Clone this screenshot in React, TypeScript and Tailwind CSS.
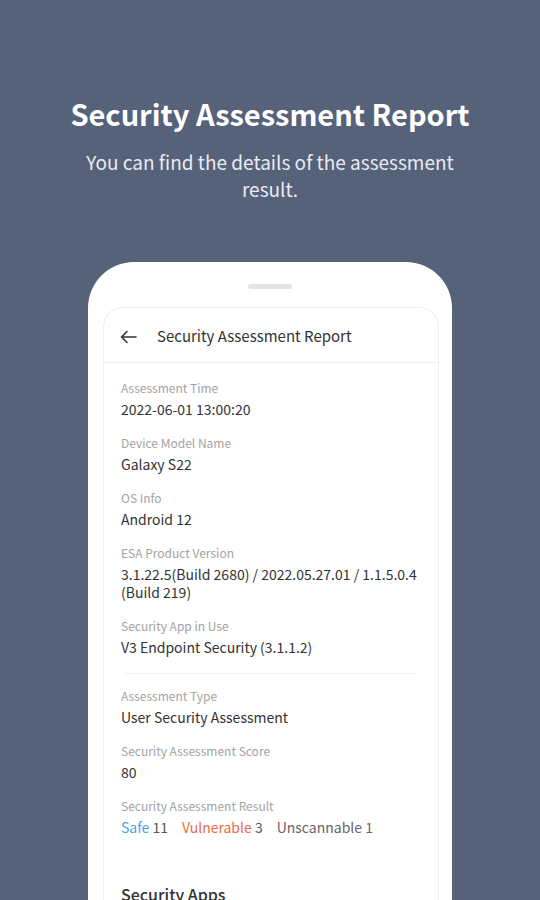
import React from "react";

const font = { fontFamily: '"Noto Sans CJK KR", "Noto Sans", sans-serif' };

const Field = ({ label, children }: { label: string; children: React.ReactNode }) => (
  <div className="mb-[17px]">
    <p className="text-[12px] leading-[16px] text-[#a3a3a3]">{label}</p>
    <div className="mt-[4px] text-[14px] leading-[18px] text-[#333333]">{children}</div>
  </div>
);

export default function App() {
  return (
    <div className="h-[900px] overflow-hidden bg-[#56617a]" style={font}>
      {/* Heading */}
      <div className="pt-[93px] text-center">
        <h1 className="text-[29px] leading-[40px] font-bold text-white">Security Assessment Report</h1>
        <p className="mx-auto mt-[15px] w-[380px] text-[19px] leading-[27px] text-[#e9ecf1]">
          You can find the details of the assessment result.
        </p>
      </div>

      {/* Phone */}
      <div className="mx-[88px] mt-[60px] h-[700px] rounded-t-[46px] bg-white">
        <div className="flex justify-center pt-[22px]">
          <div className="h-[5px] w-[44px] rounded-full bg-[#e3e3e3]"></div>
        </div>

        <div className="ml-[15px] mr-[13px] mt-[18px] h-[660px] rounded-t-[20px] border border-b-0 border-[#efefef]">
          {/* App bar */}
          <div className="flex h-[55px] items-center border-b border-[#efefef] pl-[16px] pt-[3px]">
            <svg width="17" height="14" viewBox="0 0 17 14" fill="none" stroke="#333" strokeWidth="1.6" strokeLinecap="round" strokeLinejoin="round">
              <path d="M16 7H1.5M7 1.5 1.5 7 7 12.5" />
            </svg>
            <span className="ml-[20px] text-[15px] text-[#333333]">Security Assessment Report</span>
          </div>

          {/* Details */}
          <div className="px-[17px] pt-[17px]">
            <Field label="Assessment Time">2022-06-01 13:00:20</Field>
            <Field label="Device Model Name">Galaxy S22</Field>
            <Field label="OS Info">Android 12</Field>
            <Field label="ESA Product Version">3.1.22.5(Build 2680) / 2022.05.27.01 / 1.1.5.0.4 (Build 219)</Field>
            <Field label="Security App in Use">V3 Endpoint Security (3.1.1.2)</Field>

            <div className="mx-[3px] mb-[14px] mt-[3px] border-t border-[#f2f2f2]"></div>

            <Field label="Assessment Type">User Security Assessment</Field>
            <Field label="Security Assessment Score">80</Field>
            <Field label="Security Assessment Result">
              <div className="flex gap-[14px]">
                <span>
                  <span className="text-[#4aa3e6]">Safe</span> <span className="text-[#555]">11</span>
                </span>
                <span>
                  <span className="text-[#ef6a43]">Vulnerable</span> <span className="text-[#555]">3</span>
                </span>
                <span className="text-[#666]">Unscannable 1</span>
              </div>
            </Field>

            <h2 className="mt-[47px] text-[16px] leading-[22px] font-medium text-[#333333]">Security Apps</h2>
          </div>
        </div>
      </div>
    </div>
  );
}
